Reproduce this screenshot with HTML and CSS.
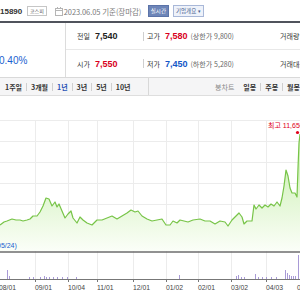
FILE: index.html
```html
<!DOCTYPE html>
<html lang="ko">
<head>
<meta charset="utf-8">
<link rel="stylesheet" href="styles.css">
</head>
<body>
<div class="page">
  <div class="topbar">
    <span class="code">15890</span>
    <span class="mkt">코스피</span>
    <svg class="cal" width="8" height="9" viewBox="0 0 8 9"><rect x="0.5" y="1.5" width="7" height="7" fill="#fff" stroke="#b5b5b5"/><line x1="0.5" y1="3.5" x2="7.5" y2="3.5" stroke="#b5b5b5"/><line x1="2.5" y1="0" x2="2.5" y2="2" stroke="#b5b5b5"/><line x1="5.5" y1="0" x2="5.5" y2="2" stroke="#b5b5b5"/></svg>
    <span class="date">2023.06.05 기준(장마감)</span>
    <span class="rt">실시간</span>
    <span class="corp">기업개요 <i>▾</i></span>
  </div>
  <div class="info">
    <div class="rate"><span>0.40%</span></div>
    <div class="grid">
      <div class="cell c1"><span class="lb">전일</span><b class="val">7,540</b></div>
      <div class="cell c2"><span class="bar"></span><span class="lb">고가</span><b class="val up">7,580</b><span class="sub">(상한가 9,800)</span></div>
      <div class="cell c3"><span class="bar"></span><span class="lb">거래량</span></div>
      <div class="cell c1 r2"><span class="lb">시가</span><b class="val up">7,550</b></div>
      <div class="cell c2 r2"><span class="bar"></span><span class="lb">저가</span><b class="val dn">7,450</b><span class="sub">(하한가 5,280)</span></div>
      <div class="cell c3 r2"><span class="bar"></span><span class="lb">거래대금</span></div>
    </div>
  </div>
  <div class="tabs">
    <div class="periods">
      <span class="tab">1주일</span><span class="sep"></span>
      <span class="tab">3개월</span><span class="sep"></span>
      <span class="tab on">1년</span><span class="sep"></span>
      <span class="tab">3년</span><span class="sep"></span>
      <span class="tab">5년</span><span class="sep"></span>
      <span class="tab">10년</span>
    </div>
    <div class="kinds">
      <span class="kind gray">봉차트</span>
      <span class="kind">일봉</span><span class="sep"></span>
      <span class="kind">주봉</span><span class="sep"></span>
      <span class="kind">월봉</span>
    </div>
  </div>
  <svg class="chart" width="300" height="202" viewBox="0 98 300 202">
    <defs>
      <linearGradient id="g" gradientUnits="userSpaceOnUse" x1="0" y1="175" x2="0" y2="253">
        <stop offset="0" stop-color="#d6f3c2"/>
        <stop offset="1" stop-color="#fbfef8"/>
      </linearGradient>
    </defs>
    <g stroke="#ececec" stroke-width="1">
      <line x1="0" y1="122.5" x2="300" y2="122.5"/>
      <line x1="0" y1="143.5" x2="300" y2="143.5"/>
      <line x1="0" y1="164.5" x2="300" y2="164.5"/>
      <line x1="0" y1="185.5" x2="300" y2="185.5"/>
      <line x1="0" y1="206.5" x2="300" y2="206.5"/>
      <line x1="0" y1="227.5" x2="300" y2="227.5"/>
      <line x1="0" y1="248.5" x2="300" y2="248.5"/>
      <line x1="35.5" y1="122" x2="35.5" y2="281"/>
      <line x1="68.5" y1="122" x2="68.5" y2="281"/>
      <line x1="97.5" y1="122" x2="97.5" y2="281"/>
      <line x1="133.5" y1="122" x2="133.5" y2="281"/>
      <line x1="166.5" y1="122" x2="166.5" y2="281"/>
      <line x1="198.5" y1="122" x2="198.5" y2="281"/>
      <line x1="231.5" y1="122" x2="231.5" y2="281"/>
      <line x1="266.5" y1="122" x2="266.5" y2="281"/>
    </g>
    <polygon fill="url(#g)" points="0,227 4,224 7,223 12,221 16,222 20,222 23,223 27,222 30,221 33,218 37,218 40,214 43,208 46,200 49,201 52,208 55,204 57,209 59,206 62,213 65,220 68,216 71,213 73,220 77,225 80,219 83,222 87,225 92,227 97,222 102,222 107,220 112,218 117,221 122,218 127,215 131,212 135,214 138,213 142,218 147,221 152,223 157,222 162,221 166,227 170,227 173,223 177,225 180,222 184,223 188,224 193,222 200,221 205,223 210,223 215,226 220,223 225,224 228,228 232,222 236,218 239,215 242,219 244,226 247,223 252,223 254,207 256,211 259,207 262,210 265,207 268,209 271,206 274,208 277,204 280,208 282,200 284,188 286,172 288,178 290,190 292,195 295,195 297,199 298,170 299,145 300,136 300,253 0,253"/>
    <polyline fill="none" stroke="#77c447" stroke-width="1.2" stroke-linejoin="round" points="0,227 4,224 7,223 12,221 16,222 20,222 23,223 27,222 30,221 33,218 37,218 40,214 43,208 46,200 49,201 52,208 55,204 57,209 59,206 62,213 65,220 68,216 71,213 73,220 77,225 80,219 83,222 87,225 92,227 97,222 102,222 107,220 112,218 117,221 122,218 127,215 131,212 135,214 138,213 142,218 147,221 152,223 157,222 162,221 166,227 170,227 173,223 177,225 180,222 184,223 188,224 193,222 200,221 205,223 210,223 215,226 220,223 225,224 228,228 232,222 236,218 239,215 242,219 244,226 247,223 252,223 254,207 256,211 259,207 262,210 265,207 268,209 271,206 274,208 277,204 280,208 282,200 284,188 286,172 288,178 290,190 292,195 295,195 297,199 298,170 299,145 300,136"/>
    <line x1="0" y1="254" x2="300" y2="254" stroke="#6c6c6c" stroke-width="1.5"/>
    <text class="lo" x="-3" y="250">05/24)</text>
    <text class="hi" x="268" y="130">최고 11,650</text>
    <circle cx="297.5" cy="134.5" r="1.6" fill="#e0001a"/>
    <g stroke="#a89ad6" stroke-width="1">
      <line x1="7.5" y1="281" x2="7.5" y2="272"/>
      <line x1="9.5" y1="281" x2="9.5" y2="278"/>
      <line x1="29.5" y1="281" x2="29.5" y2="279"/>
      <line x1="33.5" y1="281" x2="33.5" y2="279"/>
      <line x1="40.5" y1="281" x2="40.5" y2="279"/>
      <line x1="44.5" y1="281" x2="44.5" y2="278"/>
      <line x1="46.5" y1="281" x2="46.5" y2="279"/>
      <line x1="49.5" y1="281" x2="49.5" y2="279"/>
      <line x1="53.5" y1="281" x2="53.5" y2="279"/>
      <line x1="57.5" y1="281" x2="57.5" y2="279"/>
      <line x1="62.5" y1="281" x2="62.5" y2="279"/>
      <line x1="67.5" y1="281" x2="67.5" y2="279"/>
      <line x1="76.5" y1="281" x2="76.5" y2="279"/>
      <line x1="179.5" y1="281" x2="179.5" y2="277"/>
      <line x1="236.5" y1="281" x2="236.5" y2="278"/>
      <line x1="238.5" y1="281" x2="238.5" y2="277"/>
      <line x1="241.5" y1="281" x2="241.5" y2="279"/>
      <line x1="244.5" y1="281" x2="244.5" y2="279"/>
      <line x1="255.5" y1="281" x2="255.5" y2="276"/>
      <line x1="258.5" y1="281" x2="258.5" y2="279"/>
      <line x1="262.5" y1="281" x2="262.5" y2="279"/>
      <line x1="266.5" y1="281" x2="266.5" y2="279"/>
      <line x1="271.5" y1="281" x2="271.5" y2="279"/>
      <line x1="276.5" y1="281" x2="276.5" y2="279"/>
      <line x1="285.5" y1="281" x2="285.5" y2="272"/>
      <line x1="287.5" y1="281" x2="287.5" y2="275"/>
      <line x1="289.5" y1="281" x2="289.5" y2="277"/>
      <line x1="291.5" y1="281" x2="291.5" y2="278"/>
      <line x1="293.5" y1="281" x2="293.5" y2="278"/>
      <line x1="295.5" y1="281" x2="295.5" y2="278"/>
      <line x1="298.5" y1="281" x2="298.5" y2="257"/>
    </g>
    <line x1="0" y1="281.5" x2="300" y2="281.5" stroke="#777" stroke-width="1"/>
    <g stroke="#777" stroke-width="1">
      <line x1="35.5" y1="281" x2="35.5" y2="284"/>
      <line x1="68.5" y1="281" x2="68.5" y2="284"/>
      <line x1="97.5" y1="281" x2="97.5" y2="284"/>
      <line x1="133.5" y1="281" x2="133.5" y2="284"/>
      <line x1="166.5" y1="281" x2="166.5" y2="284"/>
      <line x1="198.5" y1="281" x2="198.5" y2="284"/>
      <line x1="231.5" y1="281" x2="231.5" y2="284"/>
      <line x1="266.5" y1="281" x2="266.5" y2="284"/>
    </g>
    <g class="dates">
      <text x="-1" y="292">08/01</text>
      <text x="35" y="292">09/01</text>
      <text x="68" y="292">10/04</text>
      <text x="97" y="292">11/01</text>
      <text x="133" y="292">12/01</text>
      <text x="166" y="292">01/02</text>
      <text x="198" y="292">02/01</text>
      <text x="231" y="292">03/02</text>
      <text x="266" y="292">04/03</text>
      <text x="297" y="292">05/01</text>
    </g>
  </svg>
</div>
</body>
</html>
```
FILE: styles.css
```css
html, body {
  margin: 0;
  padding: 0;
  background: #fff;
}
body {
  width: 300px;
  height: 300px;
  overflow: hidden;
  font-family: "Noto Sans CJK KR", "Liberation Sans", sans-serif;
  color: #333;
}
.page {
  width: 300px;
}
.topbar {
  display: flex;
  align-items: center;
  height: 23px;
  padding-top: 1px;
  box-sizing: border-box;
  white-space: nowrap;
  border-bottom: 2px solid #50535c;
}
.code {
  font-family: "Liberation Sans", sans-serif;
  font-weight: bold;
  font-size: 8px;
  color: #333;
  width: 21px;
}
.mkt {
  margin-left: 6px;
  font-size: 5px;
  line-height: 8px;
  padding: 0 2px;
  border: 1px solid #c6c6c6;
  color: #555;
}
.cal {
  margin-left: 8px;
  display: block;
}
.date {
  margin-left: 1px;
  font-size: 7.5px;
  color: #7a7a7a;
  letter-spacing: -0.1px;
  width: 83px;
}
.rt {
  margin-left: 1px;
  background: #6d85b8;
  color: #fff;
  font-size: 5.5px;
  line-height: 10px;
  padding: 0 2px;
  border: 1px solid #5b73a8;
}
.corp {
  margin-left: 4px;
  font-size: 5.5px;
  line-height: 10px;
  padding: 0 2px;
  color: #46608f;
  background: #eef2fa;
  border: 1px solid #a9b8d8;
}
.corp i {
  font-style: normal;
  font-size: 5px;
}
.info {
  display: flex;
  height: 55px;
  border-bottom: 1px solid #d9d9d9;
  box-sizing: border-box;
}
.rate {
  width: 66px;
  border-right: 1px solid #dcdcdc;
  display: flex;
  align-items: flex-end;
  padding-bottom: 11px;
  box-sizing: border-box;
}
.rate span {
  font-family: "Liberation Sans", sans-serif;
  font-size: 10px;
  color: #1a5fd0;
  margin-left: -1px;
}
.grid {
  flex: 1;
  display: grid;
  grid-template-columns: 76px 134px 1fr;
  grid-template-rows: 27px 27px;
}
.cell {
  display: flex;
  align-items: center;
  white-space: nowrap;
  border-bottom: 1px solid #e8e8e8;
  overflow: hidden;
}
.cell.r2 {
  border-bottom: none;
}
.c1 {
  padding-left: 11px;
}
.bar {
  width: 1px;
  height: 9px;
  background: #cfcfcf;
  margin-left: 1px;
  margin-right: 3px;
}
.lb {
  font-size: 7px;
  color: #333;
  margin-right: 5px;
}
.val {
  font-family: "Liberation Sans", sans-serif;
  font-size: 9px;
  font-weight: bold;
  color: #222;
}
.val.up {
  color: #d8001d;
}
.val.dn {
  color: #1457c8;
}
.sub {
  margin-left: 3px;
  font-size: 7px;
  color: #666;
}
.tabs {
  display: flex;
  height: 18px;
  background: #f5f5f6;
  border-bottom: 1px solid #dedede;
  box-sizing: border-box;
  white-space: nowrap;
  overflow: hidden;
}
.periods {
  width: 156px;
  display: flex;
  align-items: center;
  padding-left: 5px;
  box-sizing: border-box;
  border-right: 1px solid #d8d8d8;
}
.tab {
  font-size: 7px;
  font-weight: bold;
  color: #333;
}
.tab.on {
  color: #2851b5;
}
.sep {
  width: 1px;
  height: 8px;
  background: #cfcfcf;
  margin: 0 4px;
}
.kinds {
  flex: 1;
  display: flex;
  align-items: center;
  padding-left: 66px;
}
.kind {
  font-size: 7px;
  font-weight: bold;
  color: #333;
}
.kind.gray {
  color: #8a8a8a;
  font-weight: normal;
  margin-right: 9px;
}
.chart {
  display: block;
}
.chart text {
  font-family: "Liberation Sans", "Noto Sans CJK KR", sans-serif;
}
.dates text {
  font-size: 6.8px;
  fill: #444;
}
.hi {
  font-size: 7px;
  fill: #e0001a;
}
.lo {
  font-size: 7px;
  fill: #1a5fd0;
}
```
